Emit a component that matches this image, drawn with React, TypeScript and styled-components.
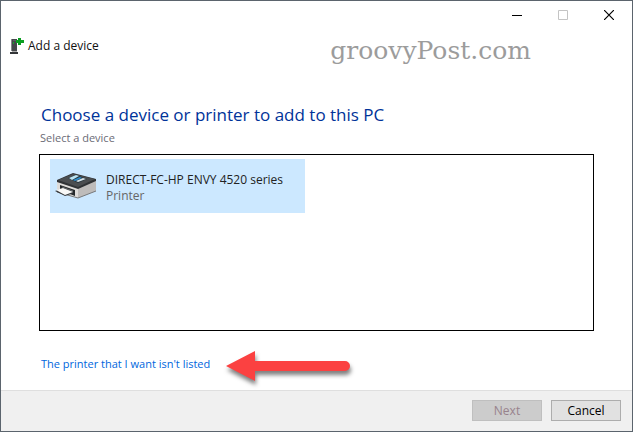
import React from "react";
import styled, { createGlobalStyle } from "styled-components";

const GlobalStyle = createGlobalStyle`
  *, *::before, *::after { box-sizing: border-box; }
  body {
    margin: 0;
    background: #fff;
    color: #1a1a1a;
    font: 12px/16px "Open Sans", "Noto Sans", sans-serif;
  }
  h1, h2, p, ul { margin: 0; padding: 0; font-weight: 400; }
  button { font: inherit; margin: 0; }
`;

const Window = styled.main`
  display: flex;
  flex-direction: column;
  min-height: 100vh;
  border: 1px solid #5b646d;
  background: #fff;
`;

const TitleBar = styled.header`
  display: flex;
  justify-content: flex-end;
`;

const CaptionButton = styled.button`
  display: grid;
  place-items: center;
  width: 46px;
  height: 28px;
  padding: 0;
  border: 0;
  background: transparent;
  color: #000;

  &:disabled { color: #c4c4c4; }
`;

const Heading = styled.div`
  display: flex;
  align-items: flex-start;
  justify-content: space-between;
  height: 40px;
  padding: 0 101px 0 8px;
`;

const WizardName = styled.h1`
  display: flex;
  align-items: center;
  gap: 3px;
  height: 34px;
  color: #111;
  font-size: 12px;
`;

const Watermark = styled.p`
  padding-top: 6px;
  color: #9c9c9c;
  font: 25px/32px "DejaVu Serif", serif;
`;

const Content = styled.section`
  display: flex;
  flex: 1;
  flex-direction: column;
  padding: 34px 38px 0;
`;

const Instruction = styled.h2`
  padding-left: 2px;
  color: #003399;
  font-size: 17px;
  line-height: 24px;
`;

const ListLabel = styled.p`
  padding: 3px 0 8px 1px;
  color: #6b6b76;
  font-size: 11px;
  line-height: 16px;
`;

const DeviceList = styled.ul`
  flex: 1;
  padding: 4px 10px;
  border: 1px solid #000;
  list-style: none;
`;

const Device = styled.button`
  display: flex;
  align-items: center;
  gap: 8px;
  width: 255px;
  height: 54px;
  padding: 0 4px;
  border: 0;
  background: #cce8ff;
  text-align: left;
`;

const DeviceText = styled.span`
  display: flex;
  flex-direction: column;
  padding-top: 3px;
`;

const DeviceName = styled.span`
  color: #222;
`;

const DeviceKind = styled.span`
  color: #666;
`;

const LinkRow = styled.div`
  display: flex;
  align-items: center;
  gap: 15px;
  height: 59px;
  padding: 10px 0 0 2px;
`;

const Link = styled.a`
  padding-bottom: 4px;
  color: #0066dd;
  font-size: 11px;
  text-decoration: none;
`;

const Arrow = styled.svg`
  overflow: visible;
  filter: drop-shadow(1px 4px 2px rgba(0, 0, 0, 0.5));
`;

const Footer = styled.footer`
  display: flex;
  justify-content: flex-end;
  gap: 9px;
  padding: 9px 11px 10px;
  border-top: 1px solid #dfdfdf;
  background: #f0f0f0;
`;

const ActionButton = styled.button`
  width: 70px;
  height: 21px;
  padding: 0;
  border: 1px solid #adadad;
  background: #e1e1e1;
  color: #000;
  line-height: 19px;

  &:disabled {
    border-color: #bfbfbf;
    background: #cccccc;
    color: #98838c;
  }
`;

function DeviceIcon() {
  return (
    <svg width="16" height="18" viewBox="0 0 16 18" aria-hidden="true">
      <path d="M2 2h6v12H2z" fill="#45484c" />
      <path d="M2 2h1v12H2z" fill="#85888b" />
      <path d="M4 3h4v1H4z" fill="#5c6064" />
      <path d="M4 5h1v2H4z" fill="#19a52b" />
      <path d="M3 14h5v1H3z" fill="#aaa" />
      <path d="M1 15h8v2H1z" fill="#333639" />
      <path d="M9 1h3v2h3v3h-3v2H9V6H7V3h2z" fill="#0c9f22" />
    </svg>
  );
}

function PrinterIcon() {
  return (
    <svg width="44" height="32" viewBox="0 0 44 32" aria-hidden="true">
      <path d="M3 10 24 18v10L3 22z" fill="#dedcda" />
      <path d="m24 18 18-8v11l-18 7z" fill="#bebcbb" />
      <path d="m3 22 21 6 18-7" fill="none" stroke="#77797b" />
      <path d="m3 10 16-7 23 6v2l-18 8L3 12z" fill="#303336" />
      <path d="m4 10 15-6 22 5-17 8z" fill="#4b4e51" />
      <path d="m14 8 8-3 11 4-9 4z" fill="#26343c" />
      <path d="m15 8 7-3 3 1-7 4z" fill="#b9e4f4" />
      <path d="m19 10 7-3 2 1-7 3z" fill="#2c8dcc" />
      <path d="m22 11 7-3 3 1-8 3z" fill="#d7e3ea" />
      <path d="m6 15 15 5v6L6 20z" fill="#24282b" />
      <path d="m8 17 11 4M8 19l11 3" stroke="#65696c" />
      <path d="m1 21 8-3 11 5-9 3z" fill="#35383b" />
      <path d="m2 20 7-2 10 4-8 3z" fill="#f8f8f7" />
    </svg>
  );
}

export default function App() {
  return (
    <>
      <GlobalStyle />
      <Window>
        <TitleBar>
          <CaptionButton aria-label="Minimize">
            <svg width="10" height="10" aria-hidden="true">
              <path d="M0 5.5h10" stroke="currentColor" />
            </svg>
          </CaptionButton>
          <CaptionButton aria-label="Maximize" disabled>
            <svg width="10" height="10" aria-hidden="true">
              <path d="M.5.5h9v9h-9z" fill="none" stroke="currentColor" />
            </svg>
          </CaptionButton>
          <CaptionButton aria-label="Close">
            <svg width="10" height="10" aria-hidden="true">
              <path d="m0 0 10 10M10 0 0 10" stroke="currentColor" strokeWidth="1.2" />
            </svg>
          </CaptionButton>
        </TitleBar>
        <Heading>
          <WizardName>
            <DeviceIcon />
            Add a device
          </WizardName>
          <Watermark>groovyPost.com</Watermark>
        </Heading>
        <Content>
          <Instruction>Choose a device or printer to add to this PC</Instruction>
          <ListLabel id="device-list-label">Select a device</ListLabel>
          <DeviceList aria-labelledby="device-list-label">
            <li>
              <Device aria-pressed="true">
                <PrinterIcon />
                <DeviceText>
                  <DeviceName>DIRECT-FC-HP ENVY 4520 series</DeviceName>
                  <DeviceKind>Printer</DeviceKind>
                </DeviceText>
              </Device>
            </li>
          </DeviceList>
          <LinkRow>
            <Link href="#not-listed">The printer that I want isn't listed</Link>
            <Arrow width="126" height="30" viewBox="0 0 126 30" aria-hidden="true">
              <path d="M1 15 30 0v10h90a5 5 0 0 1 0 10H30v10z" fill="#fb4141" />
            </Arrow>
          </LinkRow>
        </Content>
        <Footer>
          <ActionButton disabled>Next</ActionButton>
          <ActionButton>Cancel</ActionButton>
        </Footer>
      </Window>
    </>
  );
}
